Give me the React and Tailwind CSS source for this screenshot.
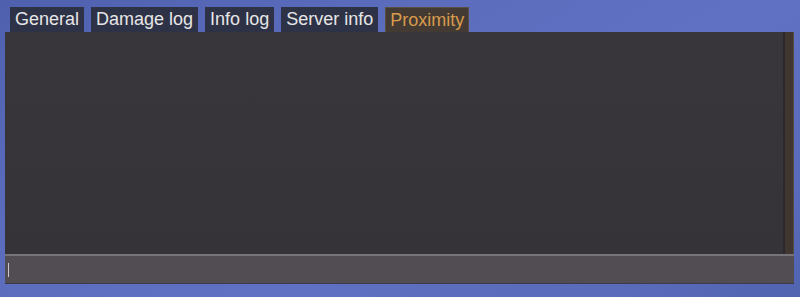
export default function App() {
  const tabs = ["General", "Damage log", "Info log", "Server info"];
  return (
    <div
      className="w-[800px] h-[297px] overflow-hidden bg-[linear-gradient(150deg,#4f60ae_0%,#5b6cbd_30%,#6070c2_60%,#5a6bbb_85%,#5064b0_100%)] pt-[7px] pl-[5px] pr-[6px]"
      style={{ fontFamily: '"Liberation Sans", Arial, sans-serif' }}
    >
      <div className="flex gap-[7px] pl-[5px] h-[25px]">
        {tabs.map((t) => (
          <div
            key={t}
            className="h-[25px] px-[5px] bg-[#2e3247] text-[#e6e6e6] text-[18px] leading-[25px]"
          >
            {t}
          </div>
        ))}
        <div className="h-[25px] px-[4px] bg-[#433b33] border border-[#5a5040] border-b-0 text-[#d89a4c] text-[18px] leading-[24px]">
          Proximity
        </div>
      </div>
      <div className="flex h-[222px] bg-[#37343a]">
        <div className="flex-1 bg-[linear-gradient(180deg,#39363b_0%,#353238_100%)]" />
        <div className="w-[11px] bg-[#3e362f] border-l-2 border-[#2b282b] border-r border-r-[#564c41]" />
      </div>
      <div className="h-[30px] bg-[#514d52] border-t-2 border-[#77737a] border-b border-b-[#3a3a48] flex items-center pl-[3px]">
        <div className="w-px h-[14px] bg-[#c8c8c8]" />
      </div>
    </div>
  );
}
